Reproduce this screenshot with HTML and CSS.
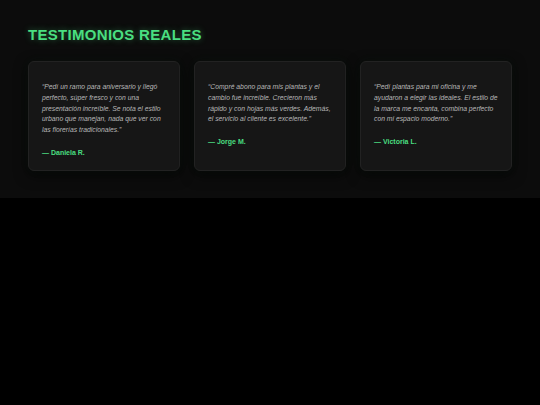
FILE: index.html
```html
<!DOCTYPE html>
<html lang="es">
<head>
<meta charset="utf-8">
<link rel="stylesheet" href="styles.css">
</head>
<body>
<section class="testimonials">
  <h2 class="title">TESTIMONIOS REALES</h2>
  <div class="grid">
    <article class="card">
      <p class="quote">“Pedí un ramo para aniversario y llegó perfecto, súper fresco y con una presentación increíble. Se nota el estilo urbano que manejan, nada que ver con las florerías tradicionales.”</p>
      <p class="author">— Daniela R.</p>
    </article>
    <article class="card">
      <p class="quote">“Compré abono para mis plantas y el cambio fue increíble. Crecieron más rápido y con hojas más verdes. Además, el servicio al cliente es excelente.”</p>
      <p class="author">— Jorge M.</p>
    </article>
    <article class="card">
      <p class="quote">“Pedí plantas para mi oficina y me ayudaron a elegir las ideales. El estilo de la marca me encanta, combina perfecto con mi espacio moderno.”</p>
      <p class="author">— Victoria L.</p>
    </article>
  </div>
</section>
</body>
</html>
```
FILE: styles.css
```css
html, body {
  margin: 0;
  padding: 0;
  background: #000;
  font-family: "Liberation Sans", Arial, sans-serif;
}
.testimonials {
  background: #0c0c0c;
  padding: 26px 28px 27px;
  height: 145px;
}
.title {
  margin: 0 0 17px;
  font-size: 15px;
  font-weight: 700;
  letter-spacing: 0.3px;
  color: #4ade80;
  line-height: 18px;
  text-shadow: 0 0 6px rgba(74, 222, 128, 0.4);
}
.grid {
  display: grid;
  grid-template-columns: repeat(3, 1fr);
  gap: 14px;
}
.card {
  background: #161616;
  border: 1px solid #222;
  border-radius: 6px;
  padding: 20px 13px 13px;
  height: 110px;
  box-sizing: border-box;
  box-shadow: 0 0 12px rgba(74, 222, 128, 0.04), 0 4px 14px rgba(0,0,0,0.6);
}
.quote {
  margin: 0 0 12px;
  font-size: 6.8px;
  font-style: italic;
  line-height: 10.8px;
  color: #b8b8b8;
}
.author {
  margin: 0;
  font-size: 7px;
  font-weight: 700;
  color: #4ade80;
  line-height: 10px;
}
```
